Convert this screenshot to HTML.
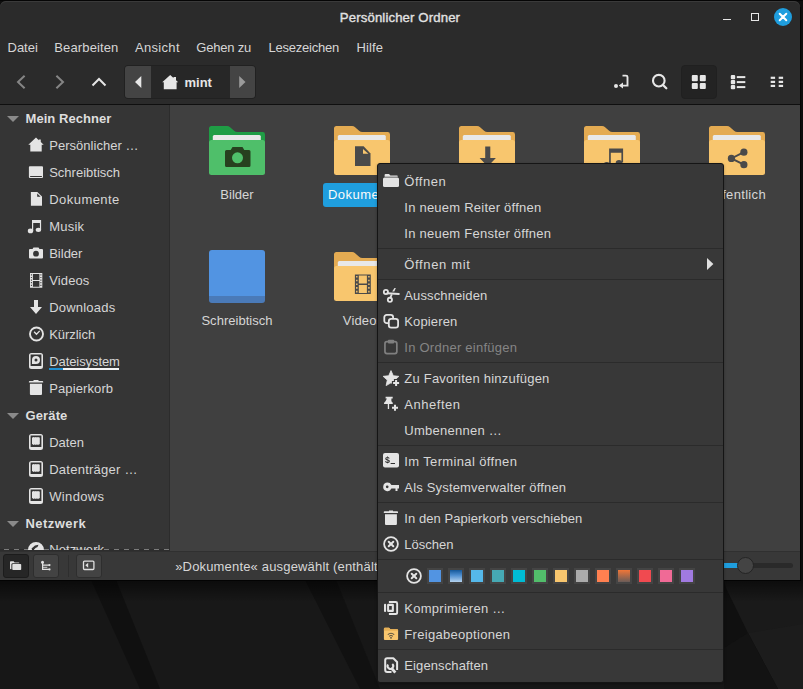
<!DOCTYPE html>
<html lang="de"><head><meta charset="utf-8"><title>Persönlicher Ordner</title>
<style>
*{box-sizing:border-box;margin:0;padding:0}
html,body{width:803px;height:689px;overflow:hidden;background:#070707}
body{position:relative;font-family:"Liberation Sans",sans-serif;font-size:13px;color:#d6d6d6}
.abs{position:absolute}
.t{position:absolute;height:20px;line-height:20px;white-space:nowrap}
.b{font-weight:700}
svg{position:absolute;overflow:visible}
#win{position:absolute;left:0;top:1px;width:800px;height:579px;background:#2b2b2b;border-radius:6px 6px 0 0;overflow:hidden;box-shadow:inset 0 1px 0 #3a3a3a}
#side{position:absolute;left:0;top:105px;width:170px;height:445px;background:#353535;overflow:hidden}
#view{position:absolute;left:170px;top:105px;width:630px;height:446px;background:#404040}
#status{position:absolute;left:0;top:551px;width:800px;height:29px;background:#383838}
#menu{position:absolute;left:377px;top:163px;width:347px;height:520px;background:#383838;border:1px solid #151515;border-radius:3px;box-shadow:0 1px 3px rgba(0,0,0,.3)}
.sep{position:absolute;left:0;width:345px;height:1px;background:#2b2b2b}
.mi{position:absolute;left:26px;height:20px;line-height:20px;white-space:nowrap}
.dis{color:#858585}
.sw{position:absolute;top:404px;width:16px;height:16px;border:2px solid #444}
</style></head><body>

<svg class="abs" style="left:0;top:0" width="803" height="689" viewBox="0 0 803 689">
<defs><linearGradient id="sh" x1="0" y1="0" x2="0" y2="1"><stop offset="0" stop-color="#000" stop-opacity=".55"/><stop offset="1" stop-color="#000" stop-opacity="0"/></linearGradient></defs>
<rect width="803" height="689" fill="#0e0e0e"/>
<rect width="803" height="1" fill="#050505"/>
<rect y="580" width="803" height="109" fill="#171717"/>
<polygon points="116,580 336,580 380,689 160,689" fill="#181818"/>
<polygon points="91,580 116,580 160,689 140,689" fill="#101010"/>
<polygon points="305,580 336,580 380,689 360,689" fill="#111111"/>
<rect x="724" y="580" width="79" height="109" fill="#1a1a1a"/>
<polygon points="748,633 803,624 803,689 778,689" fill="#1c1c1c"/>
<polygon points="724,580 724,689 778,689 748,633 726,588" fill="#101010"/>
<polygon points="724,648 748,633 778,689 724,689" fill="#131313"/>
<rect y="580" width="803" height="22" fill="url(#sh)"/>
</svg>

<div id="win">
<div class="abs" style="left:0;top:-1px;width:800px;height:580px">
<div class="t " style="left:0px;top:7.5px;left:0;width:800px;text-align:center;font-size:13.2px;color:#e2e2e2;-webkit-text-stroke:0.35px #e2e2e2;letter-spacing:0.12px">Persönlicher Ordner</div>
<div class="abs" style="left:723px;top:19px;width:8px;height:1px;background:#e6e6e6"></div>
<div class="abs" style="left:751px;top:13px;width:8px;height:8px;border:1px solid #e6e6e6"></div>
<div class="abs" style="left:774px;top:8px;width:18px;height:18px;border-radius:9px;background:#1f9ede"></div>
<svg style="left:774px;top:8px" width="18" height="18" viewBox="0 0 18 18"><path d="M5.700 5.700 L12.300 12.300 M12.300 5.700 L5.700 12.300" stroke="#fff" stroke-width="2" stroke-linecap="round" fill="none"/></svg>
<div class="t " style="left:7.5px;top:37.5px;">Datei</div>
<div class="t " style="left:54.3px;top:37.5px;letter-spacing:0.13px;">Bearbeiten</div>
<div class="t " style="left:135px;top:37.5px;letter-spacing:0.31px;">Ansicht</div>
<div class="t " style="left:196.3px;top:37.5px;letter-spacing:-0.21px;">Gehen zu</div>
<div class="t " style="left:268.5px;top:37.5px;letter-spacing:-0.23px;">Lesezeichen</div>
<div class="t " style="left:356.4px;top:37.5px;letter-spacing:0.12px;">Hilfe</div>
<svg style="left:0;top:60px" width="260" height="44" viewBox="0 60 260 44"><path d="M24.600 75.700 L18 82 L24.600 88.300" stroke="#858585" stroke-width="2" fill="none"/><path d="M56.400 75.700 L63 82 L56.400 88.300" stroke="#858585" stroke-width="2" fill="none"/><path d="M92.500 85.500 L99 79 L105.500 85.500" stroke="#e6e6e6" stroke-width="2" fill="none"/></svg>
<div class="abs" style="left:124px;top:65px;width:132px;height:34px;border:1px solid #212121;border-radius:4px;background:#272727;overflow:hidden"><div class="abs" style="left:0;top:0;width:26px;height:32px;background:#444"></div><div class="abs" style="left:105px;top:0;width:25px;height:32px;background:#444"></div></div>
<svg style="left:124px;top:65px" width="132" height="34" viewBox="124 65 132 34"><path d="M141.300 76 L141.300 88 L135 82 Z" fill="#e6e6e6"/><path d="M239.200 76 L239.200 88 L245.500 82 Z" fill="#9a9a9a"/><path d="M170.200 75 L173.500 78 V77 H176 V80.200 L178.200 82.300 H176.600 V89.200 H163.800 V82.300 H162.200 Z" fill="#e6e6e6"/></svg>
<div class="t b" style="left:184.5px;top:72.5px;color:#e6e6e6">mint</div>
<div class="abs" style="left:681px;top:65px;width:36px;height:34px;border:1px solid #202020;border-radius:4px;background:#232323"></div>
<svg style="left:600px;top:60px" width="200" height="44" viewBox="600 60 200 44" fill="#e6e6e6"><circle cx="616" cy="86" r="2"/><path d="M622.500 75.600 H626 Q627.500 75.600 627.500 77.100 V85.600 H622" stroke="#e6e6e6" stroke-width="1.900" fill="none"/><path d="M618.800 85.600 L623 82.600 V88.600 Z"/><circle cx="658.800" cy="80.700" r="5.800" stroke="#e6e6e6" stroke-width="2.100" fill="none"/><path d="M663 85 L666.300 88.300" stroke="#e6e6e6" stroke-width="2.300" stroke-linecap="round"/><rect x="691.800" y="75" width="6" height="6.200" rx="1"/><rect x="699.800" y="75" width="6" height="6.200" rx="1"/><rect x="691.800" y="83" width="6" height="6" rx="1"/><rect x="699.800" y="83" width="6" height="6" rx="1"/><rect x="730.800" y="75" width="4.400" height="4.200" rx="1"/><rect x="730.800" y="80" width="4.400" height="4.200" rx="1"/><rect x="730.800" y="85" width="4.400" height="4.200" rx="1"/><rect x="736.800" y="76.100" width="8.500" height="2"/><rect x="736.800" y="81.100" width="8.500" height="2"/><rect x="736.800" y="86.100" width="8.500" height="2"/><rect x="770.700" y="76.700" width="4.400" height="2.200"/><rect x="778.700" y="76.700" width="4.400" height="2.200"/><rect x="770.700" y="80.800" width="4.400" height="2.200"/><rect x="778.700" y="80.800" width="4.400" height="2.200"/><rect x="770.700" y="84.800" width="4.400" height="2.200"/><rect x="778.700" y="84.800" width="4.400" height="2.200"/></svg>
<div class="abs" style="left:0;top:104px;width:800px;height:1px;background:#0f0f0f"></div>
<div id="side"><div class="abs" style="left:0;top:-105px;width:170px;height:560px">
<div class="abs" style="left:169px;top:104px;width:1px;height:446px;background:#2c2c2c"></div>
<div class="abs" style="left:0;top:549px;width:170px;height:1px;background:#2c2c2c"></div>
<div class="abs" style="left:4px;top:549px;width:165px;height:1px;background:repeating-linear-gradient(90deg,#7c7c7c 0 5px,transparent 5px 10px)"></div>
<svg style="left:7px;top:115.5px" width="12" height="6" viewBox="0 0 12 6"><path d="M0 0 L12 0 L6 6 Z" fill="#8a8a8a"/></svg>
<div class="t b" style="left:25.5px;top:108.5px;letter-spacing:0.06px;color:#dedede">Mein Rechner</div>
<svg style="left:7px;top:412.5px" width="12" height="6" viewBox="0 0 12 6"><path d="M0 0 L12 0 L6 6 Z" fill="#8a8a8a"/></svg>
<div class="t b" style="left:25.5px;top:405.5px;letter-spacing:0.13px;color:#dedede">Geräte</div>
<svg style="left:7px;top:520.5px" width="12" height="6" viewBox="0 0 12 6"><path d="M0 0 L12 0 L6 6 Z" fill="#8a8a8a"/></svg>
<div class="t b" style="left:25.5px;top:513.5px;letter-spacing:0.45px;color:#dedede">Netzwerk</div>
<svg style="left:28px;top:137.0px" width="16" height="16" viewBox="0 0 16 16" fill="#e4e4e4"><path d="M8 0.600 L10.800 3.200 V2.500 H12.800 V5.100 L15.700 7.800 H13.700 V14.600 H2.300 V7.800 H0.300 Z"/></svg>
<div class="t " style="left:49.2px;top:135.5px;letter-spacing:0.03px;">Persönlicher …</div>
<svg style="left:28px;top:164.0px" width="16" height="16" viewBox="0 0 16 16" fill="#e4e4e4"><path d="M1.900 2.200 H14 Q15 2.200 15 3.200 V13 Q15 14 14 14 H1.900 Q0.900 14 0.900 13 V3.200 Q0.900 2.200 1.900 2.200 Z M2.500 12 Q2 12 2 12.500 Q2 13 2.500 13 H13.500 Q14 13 14 12.500 Q14 12 13.500 12 Z" fill-rule="evenodd"/></svg>
<div class="t " style="left:49.2px;top:162.5px;">Schreibtisch</div>
<svg style="left:28px;top:191.0px" width="16" height="16" viewBox="0 0 16 16" fill="#e4e4e4"><path d="M2.900 0.900 H9.300 L14 5.600 V14.800 H2.900 Z"/><path d="M9.200 2.400 V5.800 H12.600 Z" fill="#353535"/></svg>
<div class="t " style="left:49.2px;top:189.5px;letter-spacing:0.46px;">Dokumente</div>
<svg style="left:28px;top:218.0px" width="16" height="16" viewBox="0 0 16 16" fill="#e4e4e4"><path d="M4 2.100 H13.100 V11.900 H11.900 V5.100 H5.200 V12.900 H4 Z"/><ellipse cx="2.500" cy="12.900" rx="2.700" ry="2.300"/><ellipse cx="10.400" cy="11.850" rx="2.700" ry="2.200"/></svg>
<div class="t " style="left:49.2px;top:216.5px;letter-spacing:0.23px;">Musik</div>
<svg style="left:28px;top:245.0px" width="16" height="16" viewBox="0 0 16 16" fill="#e4e4e4"><path d="M5.500 2.500 H10.500 L11.500 4 H14 Q15 4 15 5 V12.500 Q15 13.500 14 13.500 H2 Q1 13.500 1 12.500 V5 Q1 4 2 4 H4.500 Z M8 5.800 A2.900 2.900 0 1 0 8 11.600 A2.900 2.900 0 1 0 8 5.800 Z" fill-rule="evenodd"/></svg>
<div class="t " style="left:49.2px;top:243.5px;">Bilder</div>
<svg style="left:28px;top:272.0px" width="16" height="16" viewBox="0 0 16 16" fill="#e4e4e4"><path d="M2 1 H14.300 V15.800 H2 Z M4.900 2 V7.900 H11.400 V2 Z M4.900 8.900 V14.800 H11.400 V8.900 Z M2.9 2.3 V3.5 H3.9 V2.3 Z M2.9 4.9 V6.1 H3.9 V4.9 Z M2.9 7.5 V8.7 H3.9 V7.5 Z M2.9 10.1 V11.3 H3.9 V10.1 Z M2.9 12.7 V13.9 H3.9 V12.7 Z M12.4 2.3 V3.5 H13.4 V2.3 Z M12.4 4.9 V6.1 H13.4 V4.9 Z M12.4 7.5 V8.7 H13.4 V7.5 Z M12.4 10.1 V11.3 H13.4 V10.1 Z M12.4 12.7 V13.9 H13.4 V12.7 Z" fill-rule="evenodd"/></svg>
<div class="t " style="left:49.2px;top:270.5px;letter-spacing:0.13px;">Videos</div>
<svg style="left:28px;top:299.0px" width="16" height="16" viewBox="0 0 16 16" fill="#e4e4e4"><path d="M6 1 H10 V8 H14 L8 15 L2 8 H6 Z"/></svg>
<div class="t " style="left:49.2px;top:297.5px;letter-spacing:0.21px;">Downloads</div>
<svg style="left:28px;top:326.0px" width="16" height="16" viewBox="0 0 16 16" fill="#e4e4e4"><circle cx="8.500" cy="8" r="6.500" stroke="#e4e4e4" stroke-width="1.900" fill="none"/><path d="M6.100 5.700 L8.500 8.200 L11.700 4.900" stroke="#e4e4e4" stroke-width="1.300" fill="none"/></svg>
<div class="t " style="left:49.2px;top:324.5px;letter-spacing:-0.04px;">Kürzlich</div>
<svg style="left:28px;top:353.0px" width="16" height="16" viewBox="0 0 16 16" fill="#e4e4e4"><path d="M3.500 0 H12.500 Q15 0 15 2.500 V13.500 Q15 16 12.500 16 H3.500 Q1 16 1 13.500 V2.500 Q1 0 3.500 0 Z M2.600 1.600 V13 H13.400 V1.600 Z M8 2.900 A4 4 0 1 1 8 10.900 H4 V6.900 A4 4 0 0 1 8 2.900 Z M8 5.400 A1.500 1.500 0 1 0 8 8.400 A1.500 1.500 0 1 0 8 5.400 Z" fill-rule="evenodd"/></svg>
<div class="t " style="left:49.2px;top:351.5px;letter-spacing:-0.08px;">Dateisystem</div>
<svg style="left:28px;top:380.0px" width="16" height="16" viewBox="0 0 16 16" fill="#e4e4e4"><path d="M5.500 0 H10.500 V1 H14.400 Q15.200 1 15.200 1.800 V2.600 H0.900 V1.800 Q0.900 1 1.700 1 H5.500 Z M1.900 3.700 H14 V13.900 Q14 14.900 13 14.900 H2.900 Q1.900 14.900 1.900 13.900 Z"/></svg>
<div class="t " style="left:49.2px;top:378.5px;letter-spacing:0.11px;">Papierkorb</div>
<svg style="left:28px;top:434.0px" width="16" height="16" viewBox="0 0 16 16" fill="#e4e4e4"><path d="M3.500 0 H12.500 Q15 0 15 2.500 V13.500 Q15 16 12.500 16 H3.500 Q1 16 1 13.500 V2.500 Q1 0 3.500 0 Z M2.600 1.600 V13 H13.400 V1.600 Z M4 3.600 H5.200 V2.900 H6.400 V3.600 H7.300 V2.900 H8.500 V3.600 H9.400 V2.900 H10.600 V3.600 H11.800 V10.200 H10.600 V10.900 H9.400 V10.200 H8.500 V10.900 H7.300 V10.200 H6.400 V10.900 H5.200 V10.200 H4 Z" fill-rule="evenodd"/></svg>
<div class="t " style="left:49.2px;top:432.5px;">Daten</div>
<svg style="left:28px;top:461.0px" width="16" height="16" viewBox="0 0 16 16" fill="#e4e4e4"><path d="M3.500 0 H12.500 Q15 0 15 2.500 V13.500 Q15 16 12.500 16 H3.500 Q1 16 1 13.500 V2.500 Q1 0 3.500 0 Z M2.600 1.600 V13 H13.400 V1.600 Z M4 3.600 H5.200 V2.900 H6.400 V3.600 H7.300 V2.900 H8.500 V3.600 H9.400 V2.900 H10.600 V3.600 H11.800 V10.200 H10.600 V10.900 H9.400 V10.200 H8.500 V10.900 H7.300 V10.200 H6.400 V10.900 H5.200 V10.200 H4 Z" fill-rule="evenodd"/></svg>
<div class="t " style="left:49.2px;top:459.5px;letter-spacing:0.25px;">Datenträger …</div>
<svg style="left:28px;top:488.0px" width="16" height="16" viewBox="0 0 16 16" fill="#e4e4e4"><path d="M3.500 0 H12.500 Q15 0 15 2.500 V13.500 Q15 16 12.500 16 H3.500 Q1 16 1 13.500 V2.500 Q1 0 3.500 0 Z M2.600 1.600 V13 H13.400 V1.600 Z M4 3.600 H5.200 V2.900 H6.400 V3.600 H7.300 V2.900 H8.500 V3.600 H9.400 V2.900 H10.600 V3.600 H11.800 V10.200 H10.600 V10.900 H9.400 V10.200 H8.500 V10.900 H7.300 V10.200 H6.400 V10.900 H5.200 V10.200 H4 Z" fill-rule="evenodd"/></svg>
<div class="t " style="left:49.2px;top:486.5px;letter-spacing:0.36px;">Windows</div>
<svg style="left:28px;top:542px" width="16" height="16" viewBox="0 0 16 16" fill="#e4e4e4"><path d="M8 0 A8 8 0 1 0 8 16 A8 8 0 1 0 8 0 Z M7 3.500 L10.500 2.800 L9.500 5 L7.500 6 L5.500 8.500 L7 10 L9.500 10.500 L9 13.500 L6.500 12.500 L4.500 9 L3.500 6.500 Z" fill-rule="evenodd"/></svg>
<div class="t " style="left:49.2px;top:539.5px;letter-spacing:0.10px;">Netzwerk</div>
<div class="abs" style="left:49px;top:368px;width:14px;height:2px;background:#1f8fd0"></div>
<div class="abs" style="left:63px;top:368px;width:56px;height:2px;background:#f4f4f4"></div>
</div></div>
<div class="abs" style="left:0;top:550px;width:170px;height:1px;background:#2d2d2d"></div>
<div id="view"><div class="abs" style="left:-170px;top:-105px;width:800px;height:560px">
<svg style="left:209px;top:126px" width="56" height="50" viewBox="0 0 56 50"><path d="M2.500 0 H18 Q19.800 0 21.100 1.200 L25.100 4.800 Q26.500 6 28.300 6 H53.500 Q56 5.900 56 8.400 V30 H0 V2.500 Q0 0 2.500 0 Z" fill="#1f9d45"/><rect x="3.800" y="9" width="48" height="12" rx="1.500" fill="#e8e8e8"/><path d="M2.500 14 H53.500 Q56 14 56 16.500 V46.600 Q56 49.100 53.500 49.100 H2.500 Q0 49.100 0 46.600 V16.500 Q0 14 2.500 14 Z" fill="#4fbf6a"/></svg>
<svg style="left:334px;top:126px" width="56" height="50" viewBox="0 0 56 50"><path d="M2.500 0 H18 Q19.800 0 21.100 1.200 L25.100 4.800 Q26.500 6 28.300 6 H53.500 Q56 5.900 56 8.400 V30 H0 V2.500 Q0 0 2.500 0 Z" fill="#e4ab52"/><rect x="3.800" y="9" width="48" height="12" rx="1.500" fill="#e8e8e8"/><path d="M2.500 14 H53.500 Q56 14 56 16.500 V46.600 Q56 49.100 53.500 49.100 H2.500 Q0 49.100 0 46.600 V16.500 Q0 14 2.500 14 Z" fill="#f8c66e"/></svg>
<svg style="left:459px;top:126px" width="56" height="50" viewBox="0 0 56 50"><path d="M2.500 0 H18 Q19.800 0 21.100 1.200 L25.100 4.800 Q26.500 6 28.300 6 H53.500 Q56 5.900 56 8.400 V30 H0 V2.500 Q0 0 2.500 0 Z" fill="#e4ab52"/><rect x="3.800" y="9" width="48" height="12" rx="1.500" fill="#e8e8e8"/><path d="M2.500 14 H53.500 Q56 14 56 16.500 V46.600 Q56 49.100 53.500 49.100 H2.500 Q0 49.100 0 46.600 V16.500 Q0 14 2.500 14 Z" fill="#f8c66e"/></svg>
<svg style="left:584px;top:126px" width="56" height="50" viewBox="0 0 56 50"><path d="M2.500 0 H18 Q19.800 0 21.100 1.200 L25.100 4.800 Q26.500 6 28.300 6 H53.500 Q56 5.900 56 8.400 V30 H0 V2.500 Q0 0 2.500 0 Z" fill="#e4ab52"/><rect x="3.800" y="9" width="48" height="12" rx="1.500" fill="#e8e8e8"/><path d="M2.500 14 H53.500 Q56 14 56 16.500 V46.600 Q56 49.100 53.500 49.100 H2.500 Q0 49.100 0 46.600 V16.500 Q0 14 2.500 14 Z" fill="#f8c66e"/></svg>
<svg style="left:709px;top:126px" width="56" height="50" viewBox="0 0 56 50"><path d="M2.500 0 H18 Q19.800 0 21.100 1.200 L25.100 4.800 Q26.500 6 28.300 6 H53.500 Q56 5.900 56 8.400 V30 H0 V2.500 Q0 0 2.500 0 Z" fill="#e4ab52"/><rect x="3.800" y="9" width="48" height="12" rx="1.500" fill="#e8e8e8"/><path d="M2.500 14 H53.500 Q56 14 56 16.500 V46.600 Q56 49.100 53.500 49.100 H2.500 Q0 49.100 0 46.600 V16.500 Q0 14 2.500 14 Z" fill="#f8c66e"/></svg>
<svg style="left:334px;top:252px" width="56" height="50" viewBox="0 0 56 50"><path d="M2.500 0 H18 Q19.800 0 21.100 1.200 L25.100 4.800 Q26.500 6 28.300 6 H53.500 Q56 5.900 56 8.400 V30 H0 V2.500 Q0 0 2.500 0 Z" fill="#e4ab52"/><rect x="3.800" y="9" width="48" height="12" rx="1.500" fill="#e8e8e8"/><path d="M2.500 14 H53.500 Q56 14 56 16.500 V46.600 Q56 49.100 53.500 49.100 H2.500 Q0 49.100 0 46.600 V16.500 Q0 14 2.500 14 Z" fill="#f8c66e"/></svg>
<div class="abs" style="left:209px;top:250px;width:56px;height:53px;border-radius:3px;background:linear-gradient(#5294e2 0 46px,#4a7ab8 46px);"></div>
<svg style="left:209px;top:126px" width="56" height="50" viewBox="0 0 56 50"><path d="M23.500 21 H33.500 L35.300 24 H40 Q41.500 24 41.500 25.500 V39.500 Q41.500 41 40 41 H17.500 Q16 41 16 39.500 V25.500 Q16 24 17.500 24 H21.700 Z M28.500 26.300 A5.500 5.500 0 1 0 28.500 37.300 A5.500 5.500 0 1 0 28.500 26.300 Z" fill="#27401f" fill-rule="evenodd"/></svg>
<svg style="left:334px;top:126px" width="56" height="50" viewBox="0 0 56 50"><path d="M21 20.200 H29.600 L36.500 27.600 V40 H21 Z" fill="#4a4a4a"/><path d="M29 22.900 V27.800 H34.400 Z" fill="#f8c66e"/></svg>
<svg style="left:459px;top:126px" width="56" height="50" viewBox="0 0 56 50"><path d="M26.200 20.600 H31.300 V32.100 H36.900 L28.750 40.500 L20.600 32.100 H26.200 Z" fill="#4a4a4a"/></svg>
<svg style="left:584px;top:126px" width="56" height="50" viewBox="0 0 56 50"><path d="M25.100 22.500 H39.100 V36.500 H37.400 V26.700 H26.800 V38.500 H25.100 Z" fill="#4a4a4a"/><ellipse cx="22.700" cy="38.600" rx="3.200" ry="2.700" fill="#4a4a4a"/><ellipse cx="35" cy="36.600" rx="3.200" ry="2.700" fill="#4a4a4a"/></svg>
<svg style="left:709px;top:126px" width="56" height="50" viewBox="0 0 56 50"><g fill="#4a4a4a"><circle cx="34.900" cy="26.200" r="3.600"/><circle cx="22.400" cy="32.400" r="3.600"/><circle cx="34.900" cy="38.700" r="3.600"/></g><path d="M34.900 26.200 L22.400 32.400 L34.900 38.700" stroke="#4a4a4a" stroke-width="1.900" fill="none"/></svg>
<svg style="left:334px;top:252px" width="56" height="50" viewBox="0 0 56 50"><path d="M20.900 22.400 H36.800 V42.100 H20.900 Z M24.800 23.600 V31.600 H32.900 V23.600 Z M24.800 33 V41 H32.900 V33 Z M22.1 24.0 V25.6 H23.5 V24.0 Z M22.1 27.7 V29.3 H23.5 V27.7 Z M22.1 31.4 V33.0 H23.5 V31.4 Z M22.1 35.1 V36.7 H23.5 V35.1 Z M22.1 38.8 V40.4 H23.5 V38.8 Z M34.2 24.0 V25.6 H35.6 V24.0 Z M34.2 27.7 V29.3 H35.6 V27.7 Z M34.2 31.4 V33.0 H35.6 V31.4 Z M34.2 35.1 V36.7 H35.6 V35.1 Z M34.2 38.8 V40.4 H35.6 V38.8 Z" fill="#4a4a4a" fill-rule="evenodd"/></svg>
<div class="t" style="left:177px;width:120px;text-align:center;top:184.5px;letter-spacing:0.04px;">Bilder</div>
<div class="abs" style="left:323px;top:183px;width:78px;height:24px;border-radius:3px;background:#1f9ede"></div>
<div class="t" style="left:303.3px;width:120px;text-align:center;top:184.5px;letter-spacing:0.46px;color:#fafafa">Dokumente</div>
<div class="t" style="left:427px;width:120px;text-align:center;top:184.5px;letter-spacing:0.21px;">Downloads</div>
<div class="t" style="left:552px;width:120px;text-align:center;top:184.5px;letter-spacing:0.23px;">Musik</div>
<div class="t" style="left:677px;width:120px;text-align:center;top:184.5px;letter-spacing:0.33px;">Öffentlich</div>
<div class="t" style="left:177px;width:120px;text-align:center;top:310.5px;letter-spacing:0.03px;">Schreibtisch</div>
<div class="t" style="left:303px;width:120px;text-align:center;top:310.5px;letter-spacing:0.13px;">Videos</div>
</div></div>
<div id="status"><div class="abs" style="left:0;top:-551px;width:800px;height:580px">
<div class="abs" style="left:0;top:551px;width:800px;height:1px;background:#303030"></div>
<div class="abs" style="left:3px;top:554px;width:26px;height:24px;border:1px solid #1c1c1c;border-radius:3px;background:#262626"></div>
<div class="abs" style="left:33px;top:554px;width:26px;height:24px;border:1px solid #2e2e2e;border-radius:3px;background:#434343"></div>
<div class="abs" style="left:68px;top:555px;width:1px;height:22px;background:#2e2e2e"></div>
<div class="abs" style="left:76px;top:554px;width:26px;height:24px;border:1px solid #2e2e2e;border-radius:3px;background:#434343"></div>
<svg style="left:0;top:550px" width="110" height="30" viewBox="0 550 110 30" fill="#e0e0e0"><path d="M10 562 Q10 561.200 10.800 561.200 H13.600 L14.600 562.400 H18.600 Q19.400 562.400 19.400 563.200 H12.800 Q11.400 563.200 11.400 564.600 V569.200 H10.800 Q10 569.200 10 568.400 Z"/><rect x="12.300" y="564" width="8.900" height="6.100" rx="0.800"/><circle cx="42.500" cy="562.200" r="1.500"/><path d="M42.600 562 V569.400 H49 M42.600 565.100 H49" stroke="#e0e0e0" stroke-width="1.200" fill="none"/><path d="M42.600 567.300 H47.300" stroke="#e0e0e0" stroke-width="0.900" fill="none"/><circle cx="49.500" cy="565.100" r="1.050"/><circle cx="49.500" cy="569.400" r="1.050"/><rect x="83.500" y="561.100" width="10.400" height="8.400" rx="1" stroke="#e0e0e0" stroke-width="1.300" fill="none"/><path d="M88.200 562.800 V567.800 L85.300 565.300 Z"/></svg>
<div class="t " style="left:175.2px;top:556.5px;letter-spacing:0.17px">»Dokumente« ausgewählt (enthält 0 Objekte)</div>
<div class="abs" style="left:700px;top:563px;width:93px;height:5px;border-radius:3px;background:#2a2a2a"></div>
<div class="abs" style="left:700px;top:563px;width:40px;height:5px;background:#1f9ede"></div>
<div class="abs" style="left:737px;top:557px;width:17px;height:17px;border-radius:9px;background:#444;border:1px solid #242424"></div>
</div></div>
</div></div>
<div class="abs" style="left:0;top:580px;width:801px;height:1px;background:#030303"></div>
<div class="abs" style="left:800px;top:7px;width:1px;height:573px;background:#050505"></div>
<div id="menu">
<svg style="left:5px;top:9px" width="16" height="16" viewBox="0 0 16 16" fill="#e4e4e4"><path d="M1.6 2 Q1.6 1 2.600 1 H6 L7.4 2.4 H13.8 Q14.8 2.2 14.8 3.700 H1.6 Z"/><path d="M1.5 4.4 H14.5 Q16 4.4 16 5.900 V12.4 Q16 13.9 14.5 13.9 H1.5 Q0 13.9 0 12.4 V5.900 Q0 4.4 1.5 4.4 Z"/></svg>
<div class="mi" style="left:26.3px;top:8px;letter-spacing:0.52px;">Öffnen</div>
<div class="mi" style="left:26.3px;top:34px;letter-spacing:0.23px;">In neuem Reiter öffnen</div>
<div class="mi" style="left:26.3px;top:60px;letter-spacing:0.24px;">In neuem Fenster öffnen</div>
<div class="mi" style="left:26.3px;top:91px;letter-spacing:0.64px;">Öffnen mit</div>
<svg style="left:5px;top:123px" width="16" height="16" viewBox="0 0 16 16" fill="#e4e4e4"><circle cx="2.9" cy="5" r="2.1" stroke="#e4e4e4" stroke-width="1.8" fill="none"/><circle cx="6.9" cy="12.85" r="2.1" stroke="#e4e4e4" stroke-width="1.8" fill="none"/><path d="M4.3 6.300 L15.8 6.900" stroke="#e4e4e4" stroke-width="2" stroke-linecap="round" fill="none"/><path d="M7.4 10.6 L8.800 7.400" stroke="#e4e4e4" stroke-width="1.8" fill="none"/><path d="M9.200 4.600 L11.500 1 H12.800 L11.300 4.600 Z"/></svg>
<div class="mi" style="left:26.3px;top:122px;letter-spacing:0.12px;">Ausschneiden</div>
<svg style="left:5px;top:149px" width="16" height="16" viewBox="0 0 16 16" fill="#e4e4e4"><rect x="1.3" y="1.9" width="8.8" height="8.2" rx="2.4" stroke="#e4e4e4" stroke-width="1.8" fill="none"/><rect x="5.8" y="5.900" width="9.3" height="8.800" rx="2.4" stroke="#e4e4e4" stroke-width="1.8" fill="#383838"/></svg>
<div class="mi" style="left:26.3px;top:148px;letter-spacing:0.13px;">Kopieren</div>
<svg style="left:5px;top:175px" width="16" height="16" viewBox="0 0 16 16" fill="#808080"><rect x="1.95" y="2.65" width="11.9" height="11.9" rx="2" stroke="#808080" stroke-width="1.7" fill="none"/><rect x="4.9" y="0.700" width="6.2" height="3.900" rx="1"/></svg>
<div class="mi dis" style="left:26.3px;top:174px;letter-spacing:0.25px;">In Ordner einfügen</div>
<svg style="left:5px;top:206px" width="16" height="16" viewBox="0 0 16 16" fill="#e4e4e4"><path d="M8.00 0.60 L10.29 5.74 L15.89 6.34 L11.71 10.11 L12.88 15.61 L8.00 12.80 L3.12 15.61 L4.29 10.11 L0.11 6.34 L5.71 5.74 Z" stroke="#e4e4e4" stroke-width="0.800" stroke-linejoin="round"/><path d="M8.899999999999999 10.899999999999999 H17.3 V15.3 H8.899999999999999 Z M10.899999999999999 8.899999999999999 H15.3 V17.3 H10.899999999999999 Z" fill="#383838"/><path d="M10.1 12.1 H16.1 V14.1 H10.1 Z M12.1 10.1 H14.1 V16.1 H12.1 Z"/></svg>
<div class="mi" style="left:26.3px;top:205px;letter-spacing:0.22px;">Zu Favoriten hinzufügen</div>
<svg style="left:5px;top:232px" width="16" height="16" viewBox="0 0 16 16" fill="#e4e4e4"><path d="M2.600 0.800 H9.700 V2.500 H8.4 V5.300 Q10 6.300 10 8 H6.100 V13.100 H4.800 V8 H0.900 Q0.900 6.300 2.500 5.300 H3.900 V2.500 H2.600 Z M3.900 2.500 V5.300 H2.500"/><path d="M7.8 9.600000000000001 H16.2 V14.0 H7.8 Z M9.8 7.6000000000000005 H14.2 V16.0 H9.8 Z" fill="#383838"/><path d="M9 10.8 H15 V12.8 H9 Z M11 8.8 H13 V14.8 H11 Z"/></svg>
<div class="mi" style="left:26.3px;top:231px;letter-spacing:0.53px;">Anheften</div>
<div class="mi" style="left:26.3px;top:257px;letter-spacing:0.26px;">Umbenennen …</div>
<svg style="left:5px;top:289px" width="16" height="16" viewBox="0 0 16 16" fill="#e4e4e4"><rect x="0" y="0" width="16" height="14.600" rx="2"/></svg>
<div class="mi" style="left:26.3px;top:288px;letter-spacing:0.36px;">Im Terminal öffnen</div>
<svg style="left:5px;top:315px" width="16" height="16" viewBox="0 0 16 16" fill="#e4e4e4"><path d="M4.5 3.500 A4.3 4.3 0 1 0 8.400 9.600 H12.5 V12.100 H14.5 V9.600 H16 V5.900 H8.400 A4.3 4.3 0 0 0 4.5 3.500 Z M4.2 6.450 A1.35 1.35 0 1 1 4.2 9.150 A1.35 1.35 0 1 1 4.2 6.450 Z" fill-rule="evenodd"/></svg>
<div class="mi" style="left:26.3px;top:314px;letter-spacing:0.18px;">Als Systemverwalter öffnen</div>
<svg style="left:5px;top:346px" width="16" height="16" viewBox="0 0 16 16" fill="#e4e4e4"><path d="M6 0.400 H10 V1.200 H14.200 Q15 1.200 15 2 V3 H0.800 V2 Q0.800 1.200 1.600 1.200 H6 Z M2 4.200 H13.9 V13.900 Q13.9 14.9 12.9 14.9 H3 Q2 14.9 2 13.900 Z"/></svg>
<div class="mi" style="left:26.3px;top:345px;letter-spacing:0.06px;">In den Papierkorb verschieben</div>
<svg style="left:5px;top:372px" width="16" height="16" viewBox="0 0 16 16" fill="#e4e4e4"><circle cx="8" cy="8" r="6.9" stroke="#e4e4e4" stroke-width="1.8" fill="none"/><path d="M5.700 5.700 L10.300 10.300 M10.300 5.700 L5.700 10.300" stroke="#e4e4e4" stroke-width="2" stroke-linecap="round"/></svg>
<div class="mi" style="left:26.3px;top:371px;">Löschen</div>
<svg style="left:5px;top:436px" width="16" height="16" viewBox="0 0 16 16" fill="#e4e4e4"><path d="M5.900 2 H12.600 Q14.150 2 14.150 3.500 V12.400 Q14.150 13.950 12.600 13.950 H5.900" stroke="#e4e4e4" stroke-width="1.9" fill="none"/><rect x="1" y="3.800" width="2.100" height="8.200" rx="1"/><path d="M5.300 3.800 H9.700 Q10.900 3.800 10.900 5 V10.800 Q10.900 12 9.700 12 H5.300 Q4.100 12 4.100 10.800 V5 Q4.100 3.800 5.300 3.800 Z M6.100 6.100 V9.700 H8.800 V6.100 Z" fill-rule="evenodd"/></svg>
<div class="mi" style="left:26.3px;top:435px;letter-spacing:0.27px;">Komprimieren …</div>
<svg style="left:5px;top:462px" width="16" height="16" viewBox="0 0 16 16" fill="#e4e4e4"><path d="M0.900 2.800 Q0.900 1.800 1.900 1.800 H6 L7.500 3.300 H14.100 Q15.100 3.300 15.100 4.300 V13 Q15.100 14 14.100 14 H1.900 Q0.900 14 0.900 13 Z" fill="#f8c66e"/><path d="M0.900 2.800 Q0.900 1.800 1.900 1.800 H6 L7.500 3.300 H14.100 Q15.100 3.300 15.100 4.300 V4.800 H0.900 Z" fill="#e7b157"/><path d="M4.800 8.600 Q8 5.800 11.200 8.600 M6.200 10.300 Q8 8.800 9.800 10.300" stroke="#57503f" stroke-width="1.100" fill="none"/><circle cx="8" cy="11.800" r="0.900" fill="#57503f"/></svg>
<div class="mi" style="left:26.3px;top:461px;letter-spacing:0.30px;">Freigabeoptionen</div>
<svg style="left:5px;top:493px" width="16" height="16" viewBox="0 0 16 16" fill="#e4e4e4"><path d="M8.500 14.900 H4.200 Q2.200 14.900 2.200 12.900 V3.200 Q2.200 1.200 4.200 1.200 H10.300 L14.100 5 V13" stroke="#e4e4e4" stroke-width="2" fill="none" stroke-linejoin="round"/><path d="M9.300 7 A2.800 2.800 0 1 1 5 7.600" stroke="#e4e4e4" stroke-width="2" fill="none"/><path d="M8.300 10.800 L12.300 15.600" stroke="#e4e4e4" stroke-width="2.800" fill="none"/></svg>
<div class="mi" style="left:26.3px;top:492px;letter-spacing:0.11px;">Eigenschaften</div>
<div class="abs" style="left:7.2px;top:289.5px;width:14px;height:13px;line-height:13px;font-size:8.800px;font-weight:700;color:#2e2e2e;will-change:transform">$_</div>
<div class="abs" style="left:12.6px;top:298.6px;width:4.500px;height:1.300px;background:#2e2e2e"></div>
<div class="sep" style="top:84px"></div>
<div class="sep" style="top:115px"></div>
<div class="sep" style="top:198px"></div>
<div class="sep" style="top:281px"></div>
<div class="sep" style="top:338px"></div>
<div class="sep" style="top:395px"></div>
<div class="sep" style="top:428px"></div>
<div class="sep" style="top:485px"></div>
<svg style="left:329px;top:94px" width="7" height="12" viewBox="0 0 7 12"><path d="M0 0 L6.400 6 L0 12 Z" fill="#e0e0e0"/></svg>
<svg style="left:28px;top:404px" width="16" height="16" viewBox="0 0 16 16" fill="#e4e4e4"><circle cx="8" cy="8" r="6.9" stroke="#e4e4e4" stroke-width="1.8" fill="none"/><path d="M5.700 5.700 L10.300 10.300 M10.300 5.700 L5.700 10.300" stroke="#e4e4e4" stroke-width="2" stroke-linecap="round"/></svg>
<div class="sw" style="left:49px"><div style="width:12px;height:12px;background:#5294e2"></div></div>
<div class="sw" style="left:70px"><div style="width:12px;height:12px;background:linear-gradient(#14589a,#4f8fd0 45%,#b4d2ee)"></div></div>
<div class="sw" style="left:91px"><div style="width:12px;height:12px;background:#55b8ea"></div></div>
<div class="sw" style="left:112px"><div style="width:12px;height:12px;background:#46a9b4"></div></div>
<div class="sw" style="left:133px"><div style="width:12px;height:12px;background:#00bcd4"></div></div>
<div class="sw" style="left:154px"><div style="width:12px;height:12px;background:#52be6b"></div></div>
<div class="sw" style="left:175px"><div style="width:12px;height:12px;background:#f8c66e"></div></div>
<div class="sw" style="left:196px"><div style="width:12px;height:12px;background:#ababab"></div></div>
<div class="sw" style="left:217px"><div style="width:12px;height:12px;background:#ff8050"></div></div>
<div class="sw" style="left:238px"><div style="width:12px;height:12px;background:linear-gradient(#f07638,#6a5c58)"></div></div>
<div class="sw" style="left:259px"><div style="width:12px;height:12px;background:#f04a50"></div></div>
<div class="sw" style="left:280px"><div style="width:12px;height:12px;background:#f06a96"></div></div>
<div class="sw" style="left:301px"><div style="width:12px;height:12px;background:#a07ae0"></div></div>
</div>
</body></html>
